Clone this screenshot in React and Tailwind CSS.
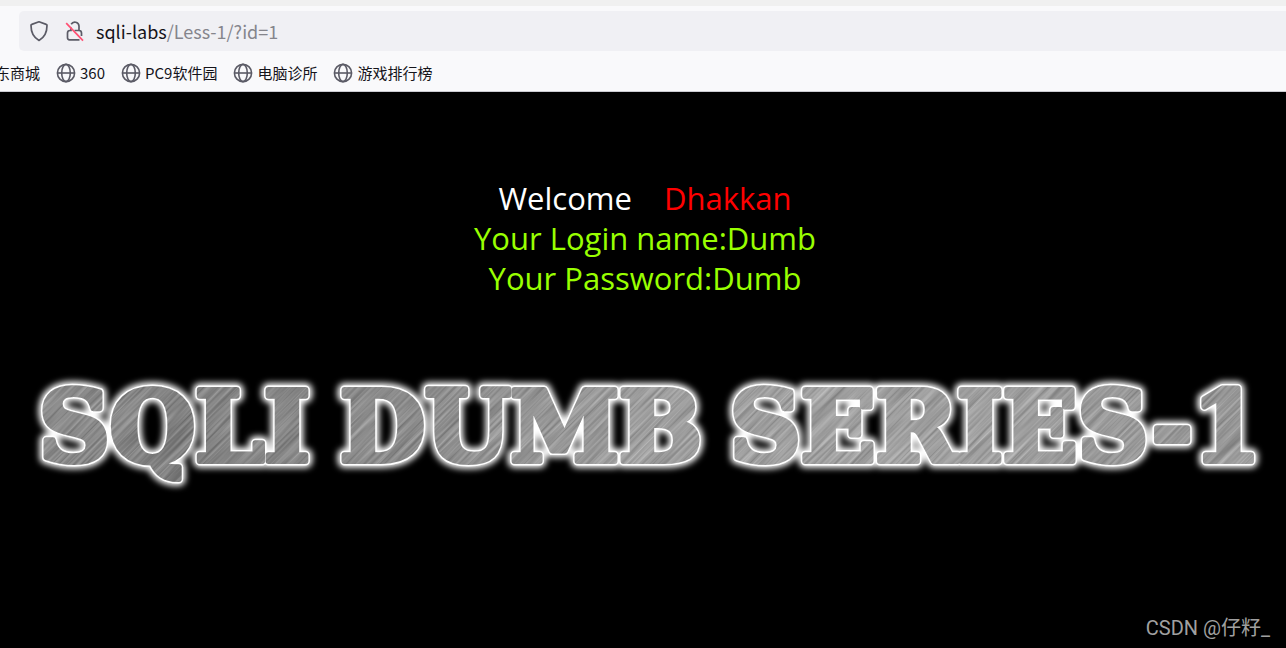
import React from 'react';

const BOOKMARKS = ['360', 'PC9软件园', '电脑诊所', '游戏排行榜'];

const WORDS = [
    { text: 'SQLI', x: 39 },
    { text: 'DUMB', x: 340 },
    { text: 'SERIES-1', x: 730 },
];

const GlobeIcon = () => (
    <svg width="20" height="20" viewBox="0 0 20 20" fill="none" stroke="#5b5b66" strokeWidth="1.6" aria-hidden="true">
        <circle cx="10" cy="10" r="8.6" />
        <ellipse cx="10" cy="10" rx="4.3" ry="8.6" />
        <path d="M1.5 10h17" />
    </svg>
);

const ShieldIcon = () => (
    <svg width="20" height="22" viewBox="0 0 20 22" fill="none" stroke="#5b5b66" strokeWidth="1.7" strokeLinejoin="round" aria-hidden="true">
        <path d="M10 1.8 17.2 4.4a1 1 0 0 1 .8 1.1c0 6.5-2.6 12-8 14.9C4.6 17.5 2 12 2 5.500a1 1 0 0 1 .8-1.100z" />
    </svg>
);

const InsecureLockIcon = () => (
    <svg width="20" height="22" viewBox="0 0 20 22" fill="none" strokeWidth="1.7" aria-hidden="true">
        <path d="M6.200 4.200A4.200 4.200 0 0 1 14 6v4.500a2.500 2.500 0 0 1 2.500 2.500v3M9.500 10.500H14M6 7.500v3H5a2.500 2.500 0 0 0-2.500 2.500v4.500A2 2 0 0 0 4.500 19.800H14.500" stroke="#5b5b66" />
        <path d="M1.200 3.200 18 20.600" stroke="#ff4f73" strokeWidth="1.7" />
    </svg>
);

const BannerText = (props) => (
    <g
        fontFamily="'DejaVu Serif', serif"
        fontWeight="700"
        fontSize="98"
        strokeLinejoin="round"
        {...props}
    >
        {WORDS.map((word) => (
            <text key={word.text} x={word.x} y="91">{word.text}</text>
        ))}
    </g>
);

// Brushed metal lettering with a white glow round it
const Banner = () => (
    <svg viewBox="0 0 1286 130" className="block w-full" role="img" aria-label="SQLI DUMB SERIES-1">
        <defs>
            <linearGradient id="metal" x1="0" y1="0" x2="1286" y2="0" gradientUnits="userSpaceOnUse">
                <stop offset="0" stopColor="#949494" />
                <stop offset="0.14" stopColor="#7c7c7c" />
                <stop offset="0.3" stopColor="#888888" />
                <stop offset="0.5" stopColor="#a2a2a2" />
                <stop offset="0.75" stopColor="#a6a6a6" />
                <stop offset="1" stopColor="#969696" />
            </linearGradient>
            <filter id="glow" x="-5%" y="-30%" width="110%" height="160%">
                <feGaussianBlur stdDeviation="3" />
            </filter>
            <filter id="brush" x="0" y="0" width="100%" height="100%" colorInterpolationFilters="sRGB">
                <feTurbulence type="fractalNoise" baseFrequency="0.012 0.4" numOctaves="3" seed="4" />
                <feColorMatrix values="1.2 0 0 0 -0.04  1.2 0 0 0 -0.04  1.2 0 0 0 -0.04  0 0 0 0 0.27" />
            </filter>
            <mask id="letters" maskUnits="userSpaceOnUse" x="0" y="0" width="1286" height="130">
                <BannerText fill="#fff" stroke="#fff" strokeWidth="6" />
            </mask>
        </defs>
        <BannerText fill="#fff" stroke="#fff" strokeWidth="14" filter="url(#glow)" />
        <BannerText fill="#fff" stroke="#fff" strokeWidth="9" />
        <g mask="url(#letters)">
            <rect width="1286" height="130" fill="url(#metal)" />
            <g transform="rotate(-45 643 65)">
                <rect x="-60" y="-660" width="1410" height="1450" filter="url(#brush)" />
            </g>
        </g>
    </svg>
);

const BrowserBar = () => (
    <header className="border-t-6 border-b border-t-[#f0f0f0] border-b-[#ccccd2] bg-[#f9f9fb] font-['Noto_Sans_CJK_SC',sans-serif] text-[#15141a]">
        <div className="mt-[5px] ml-[19px] flex h-10 items-center gap-4 rounded-l-[5px] bg-[#f0f0f4] pl-[10px]">
            <ShieldIcon />
            <div className="flex items-center gap-[11px]">
                <InsecureLockIcon />
                <a href="#" className="text-[18px] leading-6 text-[#85858c]">
                    <span className="text-[#15141a]">sqli-labs</span>/Less-1/?id=1
                </a>
            </div>
        </div>
        <nav className="flex h-10 items-center gap-4 overflow-hidden pt-1 text-[15px] whitespace-nowrap">
            <a href="#" className="-ml-[5px]">东商城</a>
            {BOOKMARKS.map((name) => (
                <a key={name} href="#" className="flex items-center gap-1">
                    <GlobeIcon />
                    {name}
                </a>
            ))}
        </nav>
    </header>
);

const App = () => (
    <div className="flex min-h-screen flex-col bg-black">
        <BrowserBar />
        <main className="flex flex-1 flex-col">
            <div className="mt-[86px] pl-1 text-center font-['Open_Sans','Noto_Sans',sans-serif] text-[31px] leading-10 text-[#99ff00]">
                <p className="flex justify-center gap-8">
                    <span className="text-white">Welcome</span>
                    <span className="text-[#ff0000]">Dhakkan</span>
                </p>
                <p>Your Login name:Dumb</p>
                <p>Your Password:Dumb</p>
            </div>
            <div className="mt-[72px]">
                <Banner />
            </div>
            <p className="mt-auto pr-4 pb-1 text-right font-['Roboto','Noto_Sans_CJK_SC',sans-serif] text-[20px] leading-8 text-[#a0a0a0]">
                CSDN @仔籽_
            </p>
        </main>
    </div>
);

export default App;
